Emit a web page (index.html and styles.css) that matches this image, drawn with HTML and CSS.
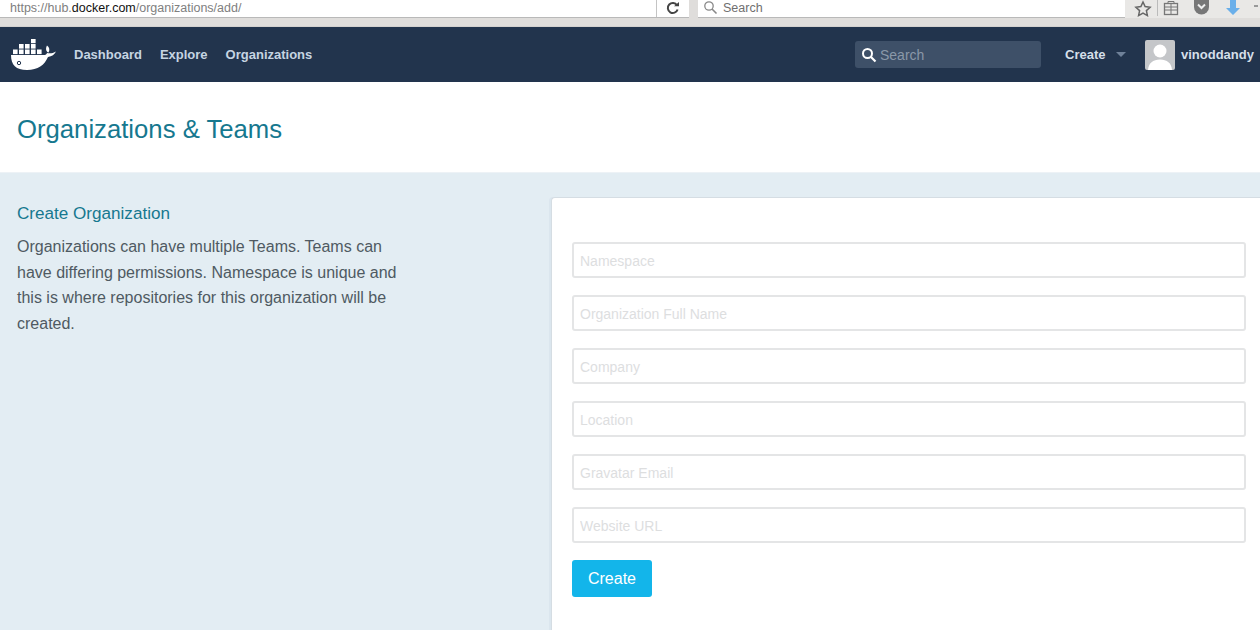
FILE: index.html
```html
<!DOCTYPE html>
<html lang="en">
<head>
    <meta charset="UTF-8">
    <title>Organizations &amp; Teams</title>
    <link rel="stylesheet" href="styles.css">
</head>
<body>
    <div class="browser-bar">
        <div class="url-box">
            <span class="url">https://hub.<b>docker.com</b>/organizations/add/</span>
            <span class="reload">
                <svg width="14" height="14" viewBox="0 0 14 14"><path d="M11 4.2A5 5 0 1 0 11.6 8.5" fill="none" stroke="#444" stroke-width="2"/><path d="M8 5.2h5V1z" fill="#444"/></svg>
            </span>
        </div>
        <div class="find-box">
            <svg width="15" height="15" viewBox="0 0 15 15"><circle cx="6" cy="6" r="4.2" fill="none" stroke="#888" stroke-width="1.3"/><path d="M9 9l4.5 4.5" stroke="#888" stroke-width="1.6"/></svg>
            <span>Search</span>
        </div>
        <div class="browser-icons">
            <svg width="18" height="18" viewBox="0 0 18 18"><path d="M9 2l2.1 4.6 5 .6-3.7 3.4 1 5L9 13.100l-4.400 2.500 1-5L1.900 7.200l5-.6z" fill="none" stroke="#666" stroke-width="1.500"/></svg>
            <i class="icon-sep"></i>
            <svg width="16" height="16" viewBox="0 0 16 16"><rect x="1.500" y="3.500" width="13" height="11" fill="none" stroke="#777" stroke-width="1.300"/><path d="M1.500 7h13M1.500 10h13M8 3.500v11M5 1.500h6v2H5z" fill="none" stroke="#777"/></svg>
            <svg class="pocket" width="17" height="17" viewBox="0 0 17 17"><path d="M1 0h15v7a7.500 7.500 0 0 1-15 0z" fill="#777"/><path d="M5 4.500L8.500 8 12 4.500" fill="none" stroke="#eee" stroke-width="2"/></svg>
            <svg class="download" width="16" height="18" viewBox="0 0 16 18"><path d="M5 0h6v8h4l-7 7-7-7h4z" fill="#6aafea"/></svg>
            <i class="more-mark"></i>
        </div>
    </div>

    <nav class="navbar">
        <svg class="logo" width="46" height="32" viewBox="0 0 46 32">
            <g fill="#fff">
                <path d="M0 16h33c1.500 0 2.500-.5 3-2 2 .6 6 .6 9-1.500-1.500 3-4 5-8 5.500C33.500 26 27 31 16 31 5 31 0 26 0 16z"/>
                <path d="M36 6.500c2.500 1.500 3 4.500 1.500 7-2-.5-3.500-3.500-1.500-7z"/>
                <rect x="2" y="10.500" width="4.600" height="4.600"/><rect x="8" y="10.500" width="4.600" height="4.600"/><rect x="14" y="10.500" width="4.600" height="4.600"/><rect x="20" y="10.500" width="4.600" height="4.600"/><rect x="26" y="10.500" width="4.600" height="4.600"/>
                <rect x="8" y="5" width="4.600" height="4.600"/><rect x="14" y="5" width="4.600" height="4.600"/><rect x="20" y="5" width="4.600" height="4.600"/>
                <rect x="20" y="0" width="4.600" height="4.200"/>
            </g>
            <circle cx="8" cy="24" r="1.700" fill="none" stroke="#22344d"/>
        </svg>
        <a class="nav-link" href="#">Dashboard</a>
        <a class="nav-link" href="#">Explore</a>
        <a class="nav-link" href="#">Organizations</a>
        <div class="nav-search">
            <svg width="16" height="16" viewBox="0 0 16 16"><circle cx="6.500" cy="6.500" r="4.500" fill="none" stroke="#fff" stroke-width="2"/><path d="M10 10l4.500 4.500" stroke="#fff" stroke-width="2.200"/></svg>
            <span>Search</span>
        </div>
        <a class="nav-create" href="#">Create <i class="caret"></i></a>
        <div class="avatar">
            <svg width="30" height="30" viewBox="0 0 30 30"><rect width="30" height="30" fill="#c4c6c9"/><circle cx="15" cy="11" r="6.500" fill="#fff"/><path d="M3 30c.5-7 5-10.500 12-10.500S26.500 23 27 30z" fill="#fff"/></svg>
        </div>
        <a class="nav-user" href="#">vinoddandy</a>
    </nav>

    <header class="page-head">
        <h1>Organizations &amp; Teams</h1>
    </header>

    <main class="content">
        <section class="intro">
            <h2>Create Organization</h2>
            <p>Organizations can have multiple Teams. Teams can have differing permissions. Namespace is unique and this is where repositories for this organization will be created.</p>
        </section>
        <form class="card">
            <input type="text" placeholder="Namespace">
            <input type="text" placeholder="Organization Full Name">
            <input type="text" placeholder="Company">
            <input type="text" placeholder="Location">
            <input type="text" placeholder="Gravatar Email">
            <input type="text" placeholder="Website URL">
            <button type="button" class="button">Create</button>
        </form>
    </main>
</body>
</html>
```

FILE: styles.css
```css
body {
    margin: 0;
    height: 630px;
    overflow: hidden;
    display: flex;
    flex-direction: column;
    font-family: "Liberation Sans", Arial, sans-serif;
    background-color: #fff;
    color: #4f5a62;
}
.browser-bar {
    height: 27px;
    flex: none;
    display: flex;
    box-sizing: border-box;
    padding-bottom: 8px;
    background-color: #dfdddb;
    border-bottom: 1px solid #d3d1cf;
}
.url-box {
    width: 689px;
    display: flex;
    background-color: #fff;
    border-bottom: 1px solid #b9b9b9;
}
.url {
    flex: 1;
    padding-left: 10px;
    font-size: 12.500px;
    line-height: 17px;
    color: #808080;
    border-right: 1px solid #c4c4c4;
}
.url b {
    font-weight: normal;
    color: #111;
}
.reload {
    width: 32px;
    display: flex;
    justify-content: center;
    padding-top: 1px;
}
.find-box {
    width: 427px;
    margin-left: 9px;
    display: flex;
    gap: 5px;
    padding-left: 5px;
    box-sizing: border-box;
    background-color: #fff;
    border-bottom: 1px solid #b9b9b9;
    font-size: 12.500px;
    line-height: 17px;
    color: #707070;
}
.browser-icons {
    flex: 1;
    display: flex;
    align-items: flex-start;
    gap: 8px;
    padding-left: 9px;
    background-color: #e9e8e6;
}
.icon-sep {
    width: 1px;
    height: 16px;
    margin: 0 -3px;
    background-color: #bbb;
}
.pocket {
    margin-left: 6px;
}
.download {
    margin-left: 7px;
}
.more-mark {
    width: 4px;
    height: 2px;
    margin: 5px 0 0 5px;
    background-color: #999;
}
.navbar {
    height: 55px;
    flex: none;
    display: flex;
    align-items: center;
    background-color: #22344d;
    font-size: 13px;
    font-weight: bold;
}
.logo {
    margin-left: 11px;
    margin-right: 17px;
}
.nav-link {
    margin-right: 18px;
    color: #c6d4e2;
    text-decoration: none;
}
.nav-search {
    width: 186px;
    height: 27px;
    margin-left: auto;
    margin-bottom: 1px;
    display: flex;
    align-items: center;
    gap: 3px;
    padding: 1px 0 0 6px;
    box-sizing: border-box;
    border-radius: 3px;
    background-color: #3e5068;
    font-size: 14px;
    font-weight: normal;
    color: #8a98a8;
}
.nav-create {
    width: 80px;
    margin-left: 24px;
    color: #d5dfe9;
    text-decoration: none;
}
.caret {
    display: inline-block;
    margin-left: 7px;
    vertical-align: 2px;
    border-left: 5px solid transparent;
    border-right: 5px solid transparent;
    border-top: 5px solid #6f8199;
}
.avatar {
    height: 30px;
    border-radius: 2px;
    overflow: hidden;
}
.nav-user {
    width: 79px;
    margin-left: 6px;
    color: #d5dfe9;
    text-decoration: none;
}
.page-head {
    height: 91px;
    flex: none;
    box-sizing: border-box;
    padding: 31px 17px 0;
    border-bottom: 1px solid #edf2f6;
}
h1 {
    margin: 0;
    font-size: 25.700px;
    line-height: 33px;
    font-weight: normal;
    color: #16788f;
}
.content {
    flex: 1;
    display: flex;
    background-color: #e3edf3;
}
.intro {
    width: 551px;
    flex: none;
    box-sizing: border-box;
    padding: 30px 147px 0 17px;
}
h2 {
    margin: 0 0 9px;
    font-size: 17.100px;
    line-height: 22px;
    font-weight: normal;
    color: #16788f;
}
.intro p {
    margin: 0;
    font-size: 16px;
    line-height: 25.500px;
}
.card {
    flex: 1;
    margin-top: 24px;
    display: flex;
    flex-direction: column;
    align-items: flex-start;
    gap: 17px;
    box-sizing: border-box;
    padding: 44px 14px 0 20px;
    background-color: #fff;
    border: 1px solid #d5dde3;
    border-right: none;
    border-bottom: none;
    border-top-left-radius: 4px;
    box-shadow: -2px 0 0 #dbe6ee;
}
input {
    width: 100%;
    height: 36px;
    flex: none;
    box-sizing: border-box;
    padding: 1px 6px 0;
    font-family: inherit;
    font-size: 14px;
    background-color: #fff;
    border: 2px solid #e4e5e6;
    border-radius: 3px;
}
input::placeholder {
    color: #dddedf;
}
.button {
    width: 80px;
    height: 37px;
    flex: none;
    font-family: inherit;
    font-size: 16px;
    color: #fff;
    background-color: #13b5ea;
    border: none;
    border-radius: 3px;
}
```
